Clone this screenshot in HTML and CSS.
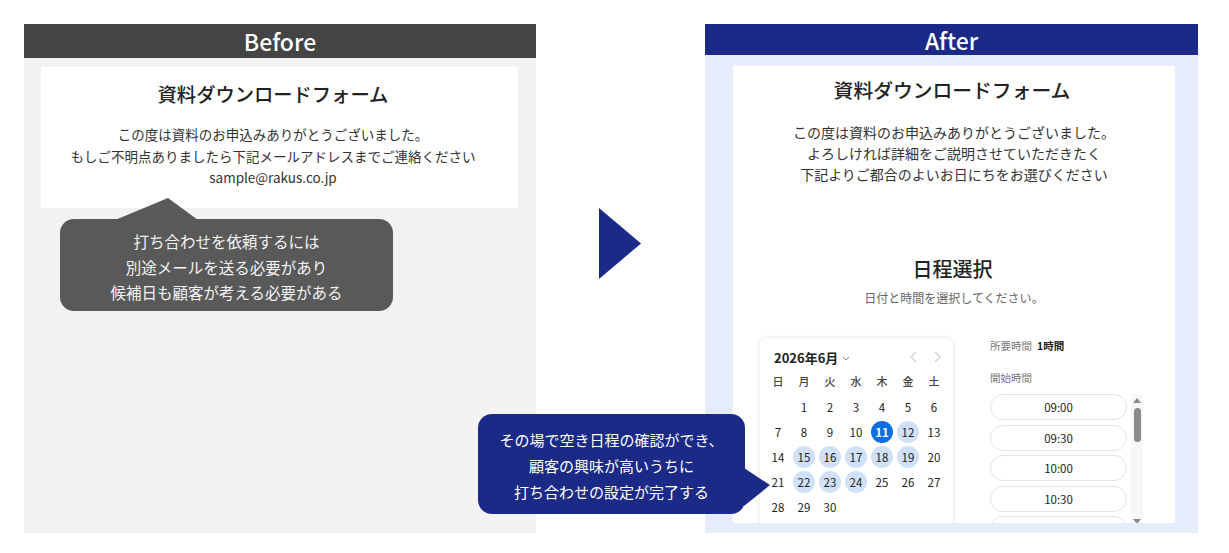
FILE: index.html
```html
<!DOCTYPE html>
<html lang="ja">
<head>
<meta charset="utf-8">
<title>Before / After</title>
<link rel="stylesheet" href="styles.css">
</head>
<body>
<div class="stage">
  <section class="panel panel-before">
    <div class="panel-head head-before">Before</div>
    <div class="before-body">
      <div class="form-card">
        <h1 class="form-title">資料ダウンロードフォーム</h1>
        <p class="form-text">この度は資料のお申込みありがとうございました。<br>もしご不明点ありましたら下記メールアドレスまでご連絡ください<br>sample@rakus.co.jp</p>
      </div>
      <div class="note note-gray">打ち合わせを依頼するには<br>別途メールを送る必要があり<br>候補日も顧客が考える必要がある</div>
    </div>
  </section>

  <div class="arrow">
    <svg width="42" height="71" viewBox="0 0 42 71"><polygon points="0,0 42,35.5 0,71" fill="#1b2a86"/></svg>
  </div>

  <section class="panel panel-after">
    <div class="panel-head head-after">After</div>
    <div class="after-body">
      <div class="after-card">
        <h1 class="after-title">資料ダウンロードフォーム</h1>
        <p class="after-text">この度は資料のお申込みありがとうございました。<br>よろしければ詳細をご説明させていただきたく<br>下記よりご都合のよいお日にちをお選びください</p>
        <h2 class="sched-title">日程選択</h2>
        <p class="sched-sub">日付と時間を選択してください。</p>
        <div class="sched-row">
          <div class="cal">
            <div class="cal-head">
              <span class="cal-month">2026年6月</span>
              <svg class="cal-caret" width="8" height="5" viewBox="0 0 8 5"><polyline points="1,1 4,4 7,1" fill="none" stroke="#888" stroke-width="1"/></svg>
              <span class="cal-nav">
                <svg width="7" height="12" viewBox="0 0 7 12"><polyline points="6,1 1,6 6,11" fill="none" stroke="#d0d0d0" stroke-width="1.2"/></svg>
                <svg width="7" height="12" viewBox="0 0 7 12"><polyline points="1,1 6,6 1,11" fill="none" stroke="#d0d0d0" stroke-width="1.2"/></svg>
              </span>
            </div>
            <div class="cal-grid">
              <span class="wd">日</span><span class="wd">月</span><span class="wd">火</span><span class="wd">水</span><span class="wd">木</span><span class="wd">金</span><span class="wd">土</span>
              <span class="d"></span><span class="d">1</span><span class="d">2</span><span class="d">3</span><span class="d">4</span><span class="d">5</span><span class="d">6</span>
              <span class="d">7</span><span class="d">8</span><span class="d">9</span><span class="d">10</span><span class="d"><b class="dot sel">11</b></span><span class="d"><b class="dot av">12</b></span><span class="d">13</span>
              <span class="d">14</span><span class="d"><b class="dot av">15</b></span><span class="d"><b class="dot av">16</b></span><span class="d"><b class="dot av">17</b></span><span class="d"><b class="dot av">18</b></span><span class="d"><b class="dot av">19</b></span><span class="d">20</span>
              <span class="d">21</span><span class="d"><b class="dot av">22</b></span><span class="d"><b class="dot av">23</b></span><span class="d"><b class="dot av">24</b></span><span class="d">25</span><span class="d">26</span><span class="d">27</span>
              <span class="d">28</span><span class="d">29</span><span class="d">30</span>
            </div>
          </div>
          <div class="times">
            <div class="dur"><span class="lbl">所要時間</span><strong>1時間</strong></div>
            <div class="lbl start-lbl">開始時間</div>
            <div class="slots-wrap">
              <div class="slots">
                <div class="slot">09:00</div>
                <div class="slot">09:30</div>
                <div class="slot">10:00</div>
                <div class="slot">10:30</div>
                <div class="slot"></div>
              </div>
              <div class="sbar">
                <svg class="sb-up" width="8" height="5" viewBox="0 0 8 5"><polygon points="0,5 4,0 8,5" fill="#8a8a8a"/></svg>
                <div class="sb-thumb"></div>
                <svg class="sb-down" width="8" height="5" viewBox="0 0 8 5"><polygon points="0,0 8,0 4,5" fill="#8a8a8a"/></svg>
              </div>
            </div>
          </div>
        </div>
      </div>
    </div>
  </section>

  <div class="note note-blue">その場で空き日程の確認ができ、<br>顧客の興味が高いうちに<br>打ち合わせの設定が完了する</div>
</div>
</body>
</html>
```

FILE: styles.css
```css
* { box-sizing: border-box; margin: 0; padding: 0; }
html, body { width: 1229px; height: 553px; overflow: hidden; background: #fff; }
body {
  font-family: "Noto Sans CJK JP", "Noto Sans", sans-serif;
  color: #222;
}
.stage {
  position: relative;
  display: flex;
  align-items: flex-start;
  padding: 24px 0 0 24px;
  height: 553px;
}
.panel { height: 509px; }
.panel-before { width: 512px; background: #f2f2f2; }
.panel-after { width: 493px; background: #e6ecfb; }
.panel-head {
  color: #fff;
  text-align: center;
  font-size: 23px;
  font-weight: 500;
}
.head-before { background: #444; height: 34px; line-height: 35px; }
.head-after { background: #1b2a86; height: 31px; line-height: 33px; }

.before-body { padding: 9px 18px 0 17px; }
.form-card {
  background: #fff;
  height: 141px;
  padding: 13px 13px 0 0;
  text-align: center;
}
.form-title { font-size: 19.3px; font-weight: 500; line-height: 28px; color: #222; }
.form-text { margin-top: 16px; font-size: 13.5px; line-height: 21.5px; color: #333; }

.note {
  color: #f2f2f2;
  text-align: center;
  border-radius: 14px;
  position: relative;
}
.note-gray {
  margin: 11px 0 0 19px;
  width: 333px;
  height: 92px;
  padding-top: 10px;
  background: #595959;
  font-size: 15.5px;
  line-height: 25.5px;
}
.note-gray::before {
  content: "";
  position: absolute;
  left: 55px;
  top: -21px;
  width: 83px;
  height: 22px;
  background: #595959;
  clip-path: polygon(0 100%, 53px 0, 100% 100%);
}
.note-blue {
  position: absolute;
  left: 478px;
  top: 414px;
  width: 267px;
  height: 100px;
  padding-top: 13px;
  background: #1b2a86;
  color: #fff;
  font-size: 15px;
  line-height: 26px;
}
.note-blue::after {
  content: "";
  position: absolute;
  left: 266px;
  top: 54px;
  width: 26px;
  height: 38px;
  background: #1b2a86;
  clip-path: polygon(0 0, 100% 45%, 0 100%);
}

.arrow { margin: 184px 64px 0 63px; width: 42px; height: 71px; }
.arrow svg { display: block; }

.after-body { padding: 11px 23px 0 28px; }
.after-card {
  background: #fff;
  height: 457px;
  overflow: hidden;
  padding-top: 10px;
  text-align: center;
}
.after-title { font-size: 19.8px; font-weight: 500; line-height: 28px; color: #222; padding-right: 4px; }
.after-text { margin-top: 18px; font-size: 14px; line-height: 21px; color: #333; }
.sched-title { margin-top: 70px; font-size: 20px; font-weight: 500; line-height: 28px; color: #222; padding-right: 3px; }
.sched-sub { margin-top: 6px; font-size: 12px; line-height: 18px; color: #666; }

.sched-row {
  display: flex;
  align-items: flex-start;
  margin-top: 31px;
  padding-left: 27px;
  text-align: left;
}
.cal {
  width: 193px;
  height: 200px;
  border-radius: 6px;
  background: #fff;
  box-shadow: 0 0 4px rgba(0, 0, 0, 0.13);
  padding: 10px 0 0 5px;
}
.cal-head {
  display: flex;
  align-items: center;
  height: 18px;
  padding-left: 9px;
}
.cal-month { font-size: 13px; font-weight: 700; color: #222; }
.cal-caret { margin-left: 4px; margin-top: 2px; }
.cal-nav { margin-left: auto; margin-right: 12px; display: flex; gap: 17px; }
.cal-nav svg { display: block; }
.cal-grid {
  display: grid;
  grid-template-columns: repeat(7, 26px);
  grid-template-rows: 26px repeat(5, 25px);
  margin-top: 2px;
}
.wd, .d {
  display: flex;
  align-items: center;
  justify-content: center;
  font-size: 11px;
  color: #333;
}
.wd { font-weight: 500; color: #444; }
.d { font-size: 11.5px; color: #222; }
.dot {
  display: flex;
  align-items: center;
  justify-content: center;
  width: 22px;
  height: 22px;
  border-radius: 50%;
  font-weight: 400;
}
.dot.av { background: #cfe0f7; color: #222; }
.dot.sel { background: #0b6fe3; color: #fff; font-weight: 700; }

.times { margin-left: 37px; margin-top: -3px; width: 153px; }
.lbl { font-size: 10.5px; color: #777; }
.dur { line-height: 16px; }
.dur strong { margin-left: 5px; font-size: 10.5px; font-weight: 700; color: #222; }
.start-lbl { margin-top: 16px; line-height: 16px; }
.slots-wrap { display: flex; margin-top: 8px; }
.slots { width: 137px; }
.slot {
  height: 26px;
  margin-bottom: 4.6px;
  border: 1px solid #e4e4e4;
  border-radius: 13px;
  text-align: center;
  line-height: 24px;
  font-size: 11.5px;
  color: #222;
}
.sbar {
  position: relative;
  margin-left: 4px;
  width: 12px;
  height: 140px;
  background: #f7f7f7;
}
.sb-up { position: absolute; left: 2px; top: 4px; }
.sb-thumb {
  position: absolute;
  left: 3px;
  top: 14px;
  width: 7px;
  height: 34px;
  border-radius: 4px;
  background: #8a8a8a;
}
.sb-down { position: absolute; left: 2px; top: 125px; }
```
